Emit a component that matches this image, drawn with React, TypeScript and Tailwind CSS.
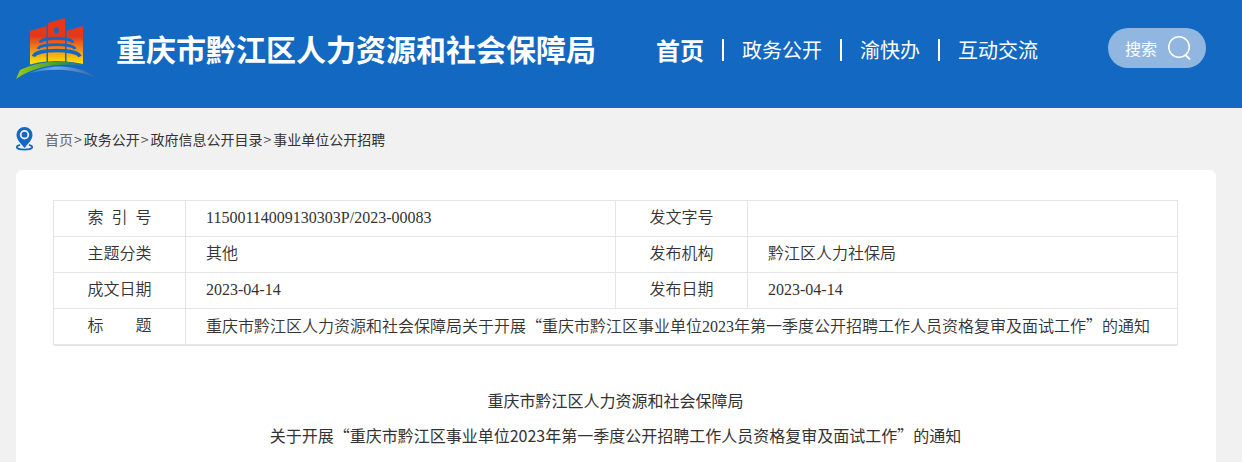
import { Fragment } from 'react';

// ─── Icons ────────────────────────────────────────────────────────────────────
const BureauLogo = () => (
  <svg className="mt-1" width="80" height="64" viewBox="0 0 80 64" fill="none" aria-hidden="true">
    <defs>
      <linearGradient id="tower" x1="0" y1="0" x2="0" y2="46" gradientUnits="userSpaceOnUse">
        <stop offset="0.4" stopColor="#e4381b" />
        <stop offset="0.68" stopColor="#f08a1c" />
        <stop offset="1" stopColor="#ffe800" />
      </linearGradient>
      <linearGradient id="hill" x1="0" y1="0" x2="80" y2="0" gradientUnits="userSpaceOnUse">
        <stop offset="0" stopColor="#98c81e" />
        <stop offset="0.55" stopColor="#3f9a35" />
        <stop offset="0.9" stopColor="#1369c1" />
      </linearGradient>
      <linearGradient id="river" x1="14" y1="0" x2="80" y2="0" gradientUnits="userSpaceOnUse">
        <stop offset="0" stopColor="#2f7fd0" />
        <stop offset="0.4" stopColor="#69aae4" />
        <stop offset="1" stopColor="#3c5fa6" />
      </linearGradient>
    </defs>
    <path d="M14 13L30.500 8V43.500Q22 44 14 46.500Z" fill="url(#tower)" />
    <path d="M32 5L49 0V43.500Q40 42.500 32 43.500Z" fill="url(#tower)" />
    <path d="M50.500 13L67 8V46Q59 44 50.500 43.500Z" fill="url(#tower)" />
    <ellipse cx="40.500" cy="12.500" rx="2.300" ry="3.200" fill="#1369c1" />
    <g stroke="#1369c1">
      <path d="M24 24.500C26 18.800 55 18.800 57 24.500" strokeWidth="2.800" />
      <path d="M22 31C24 25.200 57 25.200 59 31" strokeWidth="2.800" />
      <path d="M17.500 38.500C20 30.500 61 30.500 64 38.500" strokeWidth="3.600" />
    </g>
    <path d="M0 61L4 52C25 42 50 41 70 47.500C44 45 20 47 0 61Z" fill="url(#hill)" />
    <path d="M14 55C30 47 60 44 80 60C58 50 34 50 14 55Z" fill="url(#river)" />
  </svg>
);

const SearchIcon = () => (
  <svg width="24" height="26" viewBox="0 0 24 26" fill="none" stroke="#fff" strokeWidth="1.500" aria-hidden="true">
    <circle cx="11" cy="12" r="10.300" />
    <path d="M17 19.500L22 24.500" strokeWidth="1.800" />
  </svg>
);

const PinIcon = () => (
  <svg width="17" height="24" viewBox="0 0 17 24" fill="none" aria-hidden="true">
    <path d="M4 17.800C-1 19.400 -0.500 22.600 8.500 22.600S18 19.400 13 17.800" stroke="#1369c1" strokeWidth="1.800" />
    <path
      fillRule="evenodd"
      d="M8.500 0A8 8 0 0 0 0.500 8C0.500 13 5.500 17 8.500 21C11.500 17 16.500 13 16.500 8A8 8 0 0 0 8.500 0ZM8.500 3A4.700 4.700 0 1 1 8.500 12.400A4.700 4.700 0 0 1 8.500 3Z"
      fill="#1369c1"
    />
    <circle cx="8.500" cy="7.700" r="2.900" fill="#1369c1" />
  </svg>
);

const NAV = ['首页', '政务公开', '渝快办', '互动交流'];
const CRUMBS = ['首页', '政务公开', '政府信息公开目录', '事业单位公开招聘'];

const ROWS = [
  [{ label: '索\u2002引\u2002号', value: '11500114009130303P/2023-00083' }, { label: '发文字号', value: '' }],
  [{ label: '主题分类', value: '其他' }, { label: '发布机构', value: '黔江区人力社保局' }],
  [{ label: '成文日期', value: '2023-04-14' }, { label: '发布日期', value: '2023-04-14' }],
];

const labelCell = 'w-33 border border-[#e5e5e5] px-0 pt-0 pb-0.5 text-center font-[350]';
const valueCell = 'border border-[#e5e5e5] pt-0 pb-0.5 pl-5';

export default function App() {
  return (
    <div lang="zh-CN" className="min-h-screen bg-[#f1f1f1] font-['Noto_Sans_CJK_SC',sans-serif] text-[#333]">

      {/* ── Header ── */}
      <header className="flex h-27 items-center bg-[#1369c1] pr-9 pb-3 pl-4 whitespace-nowrap text-white">
        <BureauLogo />
        <h1 className="ml-5 text-[30px] font-bold">重庆市黔江区人力资源和社会保障局</h1>

        <nav className="ml-15 flex items-center gap-[18px] pt-1">
          {NAV.map((item, i) => (
            <Fragment key={item}>
              {i > 0 && <span className="h-[22px] w-0.5 bg-white" />}
              <a href="#" className={i === 0 ? 'text-2xl font-bold' : 'text-xl'}>{item}</a>
            </Fragment>
          ))}
        </nav>

        <button type="button" className="ml-auto flex h-10 items-center gap-[11px] rounded-full bg-[#91b7e1] pr-3.5 pl-[17px]">
          搜索
          <SearchIcon />
        </button>
      </header>

      <main className="pr-6.5 pl-4">

        {/* ── Breadcrumb ── */}
        <div className="flex h-[62px] items-center gap-3 text-sm">
          <PinIcon />
          <nav className="flex">
            {CRUMBS.map((item, i) => (
              <Fragment key={item}>
                {i > 0 && <span className="pr-0.5 pl-px text-[#555]">&gt;</span>}
                <a href="#" className={i === 0 ? 'text-[#666]' : 'text-[#333]'}>{item}</a>
              </Fragment>
            ))}
          </nav>
        </div>

        <article className="min-h-[292px] rounded-t-md bg-white pt-[30px] pr-[38px] pl-[37px]">

          {/* ── Document info ── */}
          <table className="w-full table-fixed border-collapse font-['Liberation_Serif','Noto_Sans_CJK_SC',serif] font-[350] shadow-[0_2px_0_-1px_#e5e5e5]">
            <tbody>
              {ROWS.map((row) => (
                <tr key={row[0].label} className="h-9">
                  {row.map(({ label, value }) => (
                    <Fragment key={label}>
                      <th scope="row" className={labelCell}>{label}</th>
                      <td className={valueCell}>{value}</td>
                    </Fragment>
                  ))}
                </tr>
              ))}
              <tr className="h-9">
                <th scope="row" className={labelCell}>{'标　　题'}</th>
                <td colSpan={3} className={valueCell}>
                  重庆市黔江区人力资源和社会保障局关于开展
                  <span className="font-['Noto_Sans_CJK_SC',sans-serif]">“</span>
                  重庆市黔江区事业单位2023年第一季度公开招聘工作人员资格复审及面试工作
                  <span className="font-['Noto_Sans_CJK_SC',sans-serif]">”</span>
                  的通知
                </td>
              </tr>
            </tbody>
          </table>

          {/* ── Document title ── */}
          <h2 className="mt-[38px] text-center leading-[35px]">
            重庆市黔江区人力资源和社会保障局
            <br />
            关于开展“重庆市黔江区事业单位2023年第一季度公开招聘工作人员资格复审及面试工作”的通知
          </h2>
        </article>
      </main>
    </div>
  );
}
